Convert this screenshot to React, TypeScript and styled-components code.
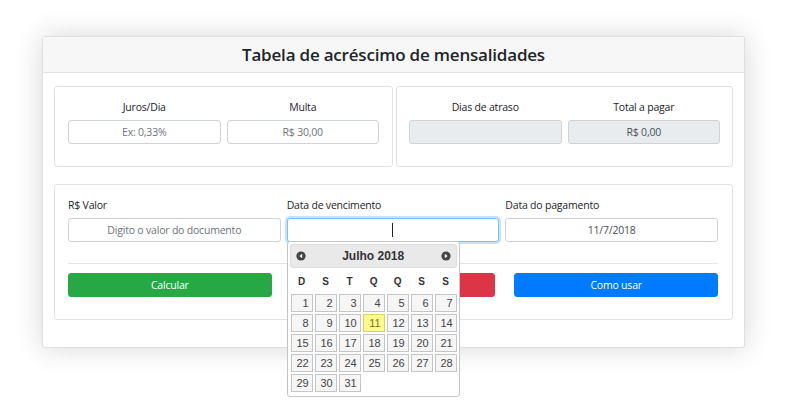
import React from "react";
import styled, { createGlobalStyle } from "styled-components";

const GlobalStyle = createGlobalStyle`
  html, body { margin: 0; padding: 0; background: #ffffff; }
  body { font-family: "Open Sans", "Noto Sans", Arial, sans-serif; color: #212529; }
  * { box-sizing: border-box; }
`;

const Page = styled.div`
  width: 800px;
  height: 400px;
  padding: 36px 0 0 42px;
  overflow: hidden;
`;

const Card = styled.div`
  width: 703px;
  height: 312px;
  background: #fff;
  border: 1px solid rgba(0, 0, 0, 0.12);
  border-radius: 3px;
  box-shadow: 0 0 28px rgba(0, 0, 0, 0.16);
  display: flex;
  flex-direction: column;
`;

const Header = styled.div`
  height: 36px;
  background: #f7f7f7;
  border-bottom: 1px solid #e2e2e2;
  display: flex;
  align-items: center;
  justify-content: center;
`;

const Title = styled.h1`
  margin: 0;
  font-size: 17px;
  font-weight: 600;
  letter-spacing: -0.2px;
  color: #212529;
`;

const Body = styled.div`
  padding: 13px 11px 0 11px;
  display: flex;
  flex-direction: column;
  gap: 17px;
`;

const TopRow = styled.div`
  display: flex;
  gap: 3px;
`;

const Panel = styled.div<{ $pad: string }>`
  flex: 1;
  border: 1px solid #e3e3e3;
  border-radius: 3px;
  padding: ${(p) => p.$pad};
`;

const TwoCols = styled.div`
  display: grid;
  grid-template-columns: 1fr 1fr;
  gap: 6px;
`;

const ThreeCols = styled.div`
  display: grid;
  grid-template-columns: 1fr 1fr 1fr;
  gap: 6px;
`;

const Field = styled.div`
  position: relative;
  display: flex;
  flex-direction: column;
`;

const Label = styled.label<{ $center?: boolean }>`
  font-size: 10.5px;
  letter-spacing: -0.2px;
  line-height: 16px;
  color: #212529;
  text-align: ${(p) => (p.$center ? "center" : "left")};
  margin-bottom: 5px;
`;

const Input = styled.input<{ $disabled?: boolean }>`
  height: 24px;
  width: 100%;
  border: 1px solid #ced4da;
  border-radius: 3px;
  background: ${(p) => (p.$disabled ? "#e9ecef" : "#fff")};
  font-family: inherit;
  font-size: 10.5px;
  letter-spacing: -0.2px;
  color: #495057;
  text-align: center;
  padding: 0 8px;
  outline: none;
  &::placeholder { color: #6c757d; opacity: 1; }
`;

const FocusBox = styled.div`
  height: 24px;
  width: 100%;
  border: 1px solid #80bdff;
  border-radius: 3px;
  box-shadow: 0 0 0 2px rgba(0, 123, 255, 0.22);
  background: #fff;
  display: flex;
  align-items: center;
  justify-content: center;
`;

const Caret = styled.span`
  width: 1px;
  height: 14px;
  background: #222;
`;

const Rule = styled.hr`
  border: 0;
  border-top: 1px solid #e6e6e6;
  margin: 21px 0 9px;
`;

const Buttons = styled.div`
  display: grid;
  grid-template-columns: 1fr 1fr 1fr;
  gap: 19.5px;
`;

const Button = styled.button<{ $bg: string }>`
  height: 24px;
  border: 1px solid ${(p) => p.$bg};
  border-radius: 3px;
  background: ${(p) => p.$bg};
  color: #fff;
  font-family: inherit;
  font-size: 10.5px;
  letter-spacing: -0.2px;
  padding: 0;
`;

/* Datepicker */
const Picker = styled.div`
  position: absolute;
  top: calc(100% - 1px);
  left: 0;
  width: 173px;
  background: #fff;
  border: 1px solid #c5c5c5;
  border-radius: 3px;
  padding: 1px 1px 3px 1px;
  z-index: 10;
  font-family: Arial, "Liberation Sans", sans-serif;
`;

const PickerHeader = styled.div`
  margin: 1px 1px 0 1px;
  height: 24px;
  background: #e9e9e9;
  border: 1px solid #dddddd;
  border-radius: 3px;
  display: flex;
  align-items: center;
  justify-content: space-between;
  padding: 0 5px;
`;

const MonthTitle = styled.span`
  font-size: 12px;
  font-weight: bold;
  color: #333;
`;

const Grid = styled.div`
  display: grid;
  grid-template-columns: repeat(7, 24px);
  padding: 0 0 0 1px;
`;

const DayName = styled.div`
  height: 24px;
  display: flex;
  align-items: center;
  justify-content: center;
  font-size: 10px;
  font-weight: bold;
  color: #333;
  margin-top: 1px;
`;

const Cell = styled.div`
  padding: 1px;
  height: 20px;
`;

const Day = styled.div<{ $hl?: boolean }>`
  height: 18px;
  border: 1px solid ${(p) => (p.$hl ? "#dad55e" : "#c5c5c5")};
  background: ${(p) => (p.$hl ? "#fffa90" : "#f6f6f6")};
  color: ${(p) => (p.$hl ? "#777620" : "#454545")};
  font-size: 11px;
  line-height: 16px;
  text-align: right;
  padding-right: 3px;
`;

const NavIcon = ({ dir }: { dir: "prev" | "next" }) => (
  <svg width="10" height="10" viewBox="0 0 10 10">
    <circle cx="5" cy="5" r="4.6" fill="#444" />
    {dir === "prev" ? (
      <polygon points="6.2,2.8 6.2,7.2 3.4,5" fill="#fff" />
    ) : (
      <polygon points="3.8,2.8 3.8,7.2 6.6,5" fill="#fff" />
    )}
  </svg>
);

const days: number[] = [];
for (let i = 1; i <= 31; i++) days.push(i);

const DatePicker = () => (
  <Picker>
    <PickerHeader>
      <NavIcon dir="prev" />
      <MonthTitle>Julho 2018</MonthTitle>
      <NavIcon dir="next" />
    </PickerHeader>
    <Grid>
      {["D", "S", "T", "Q", "Q", "S", "S"].map((d, i) => (
        <DayName key={i}>{d}</DayName>
      ))}
      {days.map((d) => (
        <Cell key={d}>
          <Day $hl={d === 11}>{d}</Day>
        </Cell>
      ))}
    </Grid>
  </Picker>
);

export default function App() {
  return (
    <>
      <GlobalStyle />
      <Page>
        <Card>
          <Header>
            <Title>Tabela de acréscimo de mensalidades</Title>
          </Header>
          <Body>
            <TopRow>
              <Panel $pad="12px 13px 22px 13px">
                <TwoCols>
                  <Field>
                    <Label $center>Juros/Dia</Label>
                    <Input placeholder="Ex: 0,33%" />
                  </Field>
                  <Field>
                    <Label $center>Multa</Label>
                    <Input placeholder="R$ 30,00" />
                  </Field>
                </TwoCols>
              </Panel>
              <Panel $pad="12px 12px 22px 12px">
                <TwoCols>
                  <Field>
                    <Label $center>Dias de atraso</Label>
                    <Input $disabled readOnly />
                  </Field>
                  <Field>
                    <Label $center>Total a pagar</Label>
                    <Input $disabled readOnly value="R$ 0,00" />
                  </Field>
                </TwoCols>
              </Panel>
            </TopRow>
            <Panel $pad="12px 14px 22px 13px">
              <ThreeCols>
                <Field>
                  <Label>R$ Valor</Label>
                  <Input placeholder="Digito o valor do documento" />
                </Field>
                <Field>
                  <Label>Data de vencimento</Label>
                  <FocusBox>
                    <Caret />
                  </FocusBox>
                  <DatePicker />
                </Field>
                <Field>
                  <Label>Data do pagamento</Label>
                  <Input readOnly value="11/7/2018" />
                </Field>
              </ThreeCols>
              <Rule />
              <Buttons>
                <Button $bg="#28a745">Calcular</Button>
                <Button $bg="#dc3545" aria-label="Limpar" />
                <Button $bg="#007bff">Como usar</Button>
              </Buttons>
            </Panel>
          </Body>
        </Card>
      </Page>
    </>
  );
}
